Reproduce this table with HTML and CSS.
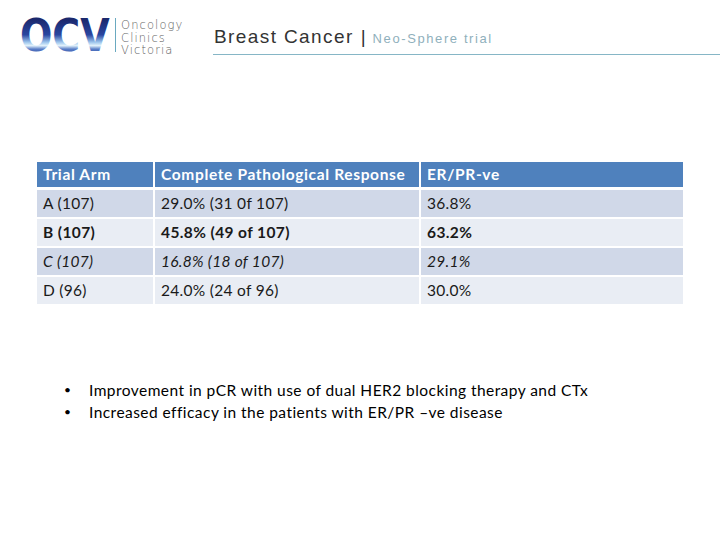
FILE: index.html
```html
<!DOCTYPE html>
<html>
<head>
<meta charset="utf-8">
<link rel="stylesheet" href="styles.css">
</head>
<body>
<header class="top">
  <div class="logo">
    <svg class="ocv" width="92" height="40" viewBox="0 0 92 40">
      <defs>
        <linearGradient id="g" gradientUnits="userSpaceOnUse" x1="0" y1="3.4" x2="0" y2="32.8">
          <stop offset="0" stop-color="#1b286c"/>
          <stop offset="0.45" stop-color="#2a46a0"/>
          <stop offset="0.66" stop-color="#9cc4ec"/>
          <stop offset="0.76" stop-color="#e2f2fb"/>
          <stop offset="0.86" stop-color="#5b80c8"/>
          <stop offset="1" stop-color="#2b47a3"/>
        </linearGradient>
      </defs>
      <text x="1" y="30.3" transform="scale(1,1.19)" class="ocv-text" fill="url(#g)">OCV</text>
    </svg>
    <span class="divider"></span>
    <div class="brand">
      <span>Oncology</span>
      <span>Clinics</span>
      <span>Victoria</span>
    </div>
  </div>
  <div class="title">
    <span class="main">Breast Cancer</span><span class="bar">|</span><span class="sub">Neo-Sphere trial</span>
  </div>
</header>

<main class="content">
  <table class="trial">
    <thead>
      <tr><th class="c1">Trial Arm</th><th class="c2">Complete Pathological Response</th><th class="c3">ER/PR-ve</th></tr>
    </thead>
    <tbody>
      <tr class="odd"><td>A (107)</td><td>29.0% (31 0f 107)</td><td>36.8%</td></tr>
      <tr class="even bold"><td>B (107)</td><td>45.8% (49 of 107)</td><td>63.2%</td></tr>
      <tr class="odd ital"><td>C (107)</td><td>16.8% (18 of 107)</td><td>29.1%</td></tr>
      <tr class="even"><td>D (96)</td><td>24.0% (24 of 96)</td><td>30.0%</td></tr>
    </tbody>
  </table>

  <ul class="points">
    <li>Improvement in pCR with use of dual HER2 blocking therapy and CTx</li>
    <li>Increased efficacy in the patients with ER/PR &ndash;ve disease</li>
  </ul>
</main>
</body>
</html>
```

FILE: styles.css
```css
html, body {
  margin: 0;
  padding: 0;
  background: #ffffff;
  width: 720px;
  height: 540px;
  overflow: hidden;
}

body {
  font-family: Lato, "Open Sans", sans-serif;
  color: #1a1a1a;
}

.top {
  display: flex;
  align-items: flex-start;
}

.logo {
  display: flex;
  align-items: flex-start;
  padding: 15px 0 0 19px;
  width: 213px;
  box-sizing: border-box;
}

.ocv {
  display: block;
  flex: none;
  overflow: visible;
}

.ocv-text {
  font-family: "DejaVu Sans", sans-serif;
  font-weight: 700;
  font-size: 38px;
}

.divider {
  width: 1px;
  height: 34px;
  background: #6aa9c0;
  margin: 3px 5px 0 4px;
}

.brand {
  display: flex;
  flex-direction: column;
  padding-top: 4px;
  font-family: "DejaVu Sans", sans-serif;
  font-weight: 300;
  font-size: 11.5px;
  line-height: 12.5px;
  letter-spacing: 1.1px;
  color: #5f5f5f;
}

.title {
  flex: 1;
  margin-top: 26px;
  padding: 0 0 4px 1px;
  line-height: 22px;
  border-bottom: 1px solid #86b6c6;
  font-family: "Liberation Sans", Arial, sans-serif;
  white-space: nowrap;
}

.title .main {
  font-size: 19px;
  letter-spacing: 1.4px;
  color: #333333;
}

.title .bar {
  font-size: 19px;
  color: #333333;
  margin: 0 7px 0 7px;
}

.title .sub {
  font-size: 13px;
  letter-spacing: 1.6px;
  color: #8fb0bc;
}

.content {
  padding: 104px 0 0 36px;
}

.trial {
  border-collapse: separate;
  border-spacing: 0;
  width: 648px;
  font-size: 15.5px;
  letter-spacing: 0.3px;
}

.trial th,
.trial td {
  border: 1px solid #ffffff;
  text-align: left;
  padding: 0 0 0 6px;
}

.trial th {
  background: #4f81bd;
  color: #ffffff;
  font-weight: 700;
  letter-spacing: 0.65px;
  height: 25px;
  border-bottom-width: 2px;
}

.trial td {
  height: 27px;
}

.trial .c1 { width: 110px; }
.trial .c2 { width: 258px; }

.trial .odd td { background: #d0d8e8; }
.trial .even td { background: #e9edf4; }
.trial .bold td { font-weight: 700; letter-spacing: 0.4px; }
.trial .ital td { font-style: italic; }

.points {
  list-style: none;
  margin: 74px 0 0 0;
  padding: 0 0 0 53px;
  font-size: 15.5px;
  letter-spacing: 0.45px;
  line-height: 22px;
  color: #000000;
}

.points li {
  position: relative;
}

.points li::before {
  content: "\2022";
  position: absolute;
  left: -25px;
  font-size: 12px;
}
```
